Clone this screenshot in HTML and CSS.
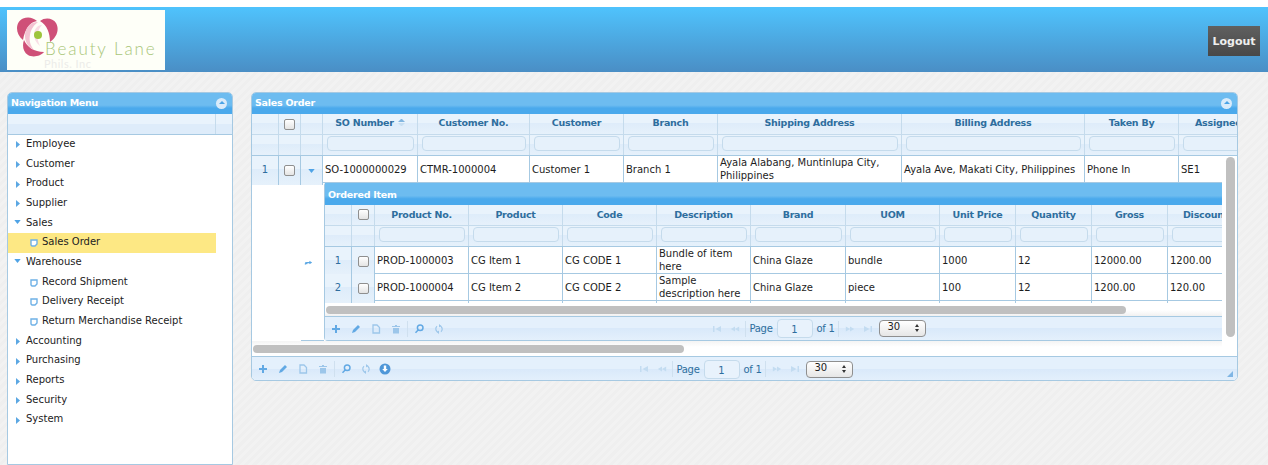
FILE: index.html
```html
<!DOCTYPE html>
<html lang="en">
<head>
  <meta charset="UTF-8">
  <title>Sales Order</title>
  <link rel="stylesheet" href="styles.css">
</head>
<body>
  <svg class="defs" width="0" height="0">
    <symbol id="i-right" viewBox="0 0 4 7"><path d="M0 0l4 3.500L0 7z"/></symbol>
    <symbol id="i-down" viewBox="0 0 8 5"><path d="M0 0h8L4 5z"/></symbol>
    <symbol id="i-leaf" viewBox="0 0 8 8"><path d="M1 1h6v4L5 7H2L1 6z" fill="#fff" stroke="#6fb1e6" stroke-width="1.4"/></symbol>
    <symbol id="i-plus" viewBox="0 0 10 10"><path d="M4 1h2v3h3v2H6v3H4V6H1V4h3z"/></symbol>
    <symbol id="i-pencil" viewBox="0 0 10 10"><path d="M7 1l2 2-5 5-3 1 1-3z"/></symbol>
    <symbol id="i-doc" viewBox="0 0 10 10"><path d="M2 1h4l2.500 2.500V9H2z" fill="none" stroke="currentColor" stroke-width="1.300"/></symbol>
    <symbol id="i-trash" viewBox="0 0 10 10"><path d="M1 2h8v1H1zM4 1h2v1H4zM2 4h6v5.500H2z"/></symbol>
    <symbol id="i-search" viewBox="0 0 10 10"><path d="M6.200 1a2.800 2.800 0 1 0 0 5.600 2.800 2.800 0 0 0 0-5.600zM4.200 6L1.500 8.700" fill="none" stroke="currentColor" stroke-width="1.500"/></symbol>
    <symbol id="i-refresh" viewBox="0 0 10 10"><path d="M3 2.300a3.400 3.400 0 0 0 2 6M7 7.700a3.400 3.400 0 0 0-2-6" fill="none" stroke="currentColor" stroke-width="1.200"/><path d="M5 0v3.400L7 1.700zM5 10V6.600L3 8.300z"/></symbol>
    <symbol id="i-download" viewBox="0 0 12 12"><circle cx="6" cy="6" r="5.500" fill="#4f97d8"/><path d="M4.800 2.500h2.400V6h1.600L6 9 3.200 6h1.600z" fill="#fff"/></symbol>
    <symbol id="i-first" viewBox="0 0 10 8"><path d="M1 1h1.500v6H1zM9 1v6L3.500 4z"/></symbol>
    <symbol id="i-prev" viewBox="0 0 12 8"><path d="M6 1v6L1 4zM11 1v6L6 4z"/></symbol>
    <symbol id="i-next" viewBox="0 0 12 8"><path d="M1 1v6l5-3zM6 1v6l5-3z"/></symbol>
    <symbol id="i-last" viewBox="0 0 10 8"><path d="M1 1v6l5.500-3zM7.500 1H9v6H7.500z"/></symbol>
    <symbol id="i-sub" viewBox="0 0 10 8"><path d="M1 5.500L3 3.500h5" fill="none" stroke="currentColor" stroke-width="1.300"/><path d="M6 1.500l3 2-3 2zM1 2.500l1 3 2.500-.5z"/></symbol>
  </svg>

  <header class="header">
    <div class="logo">
      <svg class="logo-mark" viewBox="0 0 46 46" width="46" height="46">
        <path d="M9 26C1 20 1 8 9 4.500c5-2 10-1 14 2.500C16 8 11 15 9 26z" fill="#cf5078"/>
        <path d="M26 7c5-4 13-3 16 2 4 7 0 15-6 19 0-9-3-17-10-21z" fill="#cf5078"/>
        <path d="M10 26c3 7 10 12 20 12-3 4-11 6-16 3-5-3-6-10-4-15z" fill="#cf5078"/>
        <path d="M24 8c-8 0-13 6-13 14 0 6 3 11 9 14-4-5-5-10-4-15 1-6 4-10 8-13z" fill="#f3c3d2"/>
        <path d="M28 11c-5 0-8 5-8 9 0 5 2 9 6 12-2-4-3-8-2-12 0-4 2-7 4-9z" fill="#f8dde5"/>
        <circle cx="24" cy="21" r="4" fill="#9dc53c"/>
      </svg>
      <span class="logo-name">Beauty Lane</span>
      <span class="logo-sub">Phils. Inc</span>
    </div>
    <button class="logout">Logout</button>
  </header>

  <main class="content">
    <aside class="panel nav-panel">
      <div class="title">Navigation Menu<span class="collapse"></span></div>
      <div class="nav-tools"><span></span></div>
      <ul class="tree">
        <li><svg class="ico-right"><use href="#i-right"/></svg>Employee</li>
        <li><svg class="ico-right"><use href="#i-right"/></svg>Customer</li>
        <li><svg class="ico-right"><use href="#i-right"/></svg>Product</li>
        <li><svg class="ico-right"><use href="#i-right"/></svg>Supplier</li>
        <li><svg class="ico-down"><use href="#i-down"/></svg>Sales</li>
        <li class="leaf selected"><svg class="ico-leaf"><use href="#i-leaf"/></svg>Sales Order</li>
        <li><svg class="ico-down"><use href="#i-down"/></svg>Warehouse</li>
        <li class="leaf"><svg class="ico-leaf"><use href="#i-leaf"/></svg>Record Shipment</li>
        <li class="leaf"><svg class="ico-leaf"><use href="#i-leaf"/></svg>Delivery Receipt</li>
        <li class="leaf"><svg class="ico-leaf"><use href="#i-leaf"/></svg>Return Merchandise Receipt</li>
        <li><svg class="ico-right"><use href="#i-right"/></svg>Accounting</li>
        <li><svg class="ico-right"><use href="#i-right"/></svg>Purchasing</li>
        <li><svg class="ico-right"><use href="#i-right"/></svg>Reports</li>
        <li><svg class="ico-right"><use href="#i-right"/></svg>Security</li>
        <li><svg class="ico-right"><use href="#i-right"/></svg>System</li>
      </ul>
    </aside>

    <section class="panel grid-panel">
      <div class="title">Sales Order<span class="collapse"></span></div>
      <div class="clip">
        <div class="row head so-cols">
          <div></div>
          <div class="center"><input type="checkbox"></div>
          <div></div>
          <div>SO Number<span class="sort"><i class="up"></i><i class="dn"></i></span></div>
          <div>Customer No.</div>
          <div>Customer</div>
          <div>Branch</div>
          <div>Shipping Address</div>
          <div>Billing Address</div>
          <div>Taken By</div>
          <div>Assigned To</div>
        </div>
        <div class="row filter so-cols">
          <div></div><div></div><div></div>
          <div><input></div><div><input></div><div><input></div><div><input></div>
          <div><input></div><div><input></div><div><input></div><div><input></div>
        </div>
      </div>
      <div class="body-wrap">
        <div class="body-scroll">
          <div class="row data so-cols">
            <div class="rn">1</div>
            <div class="center"><input type="checkbox"></div>
            <div class="center"><svg class="ico-down"><use href="#i-down"/></svg></div>
            <div>SO-1000000029</div>
            <div>CTMR-1000004</div>
            <div>Customer 1</div>
            <div>Branch 1</div>
            <div>Ayala Alabang, Muntinlupa City, Philippines</div>
            <div>Ayala Ave, Makati City, Philippines</div>
            <div>Phone In</div>
            <div>SE1</div>
          </div>
          <div class="sub-row">
            <div class="sub-gutter"><svg class="ico-sub"><use href="#i-sub"/></svg></div>
            <div class="sub-panel">
              <div class="title">Ordered Item</div>
              <div class="row head item-cols">
                <div></div>
                <div class="center"><input type="checkbox"></div>
                <div>Product No.</div>
                <div>Product</div>
                <div>Code</div>
                <div>Description</div>
                <div>Brand</div>
                <div>UOM</div>
                <div>Unit Price</div>
                <div>Quantity</div>
                <div>Gross</div>
                <div>Discount</div>
              </div>
              <div class="row filter item-cols">
                <div></div><div></div>
                <div><input></div><div><input></div><div><input></div><div><input></div><div><input></div>
                <div><input></div><div><input></div><div><input></div><div><input></div><div><input></div>
              </div>
              <div class="row data item-cols">
                <div class="rn">1</div>
                <div class="center"><input type="checkbox"></div>
                <div>PROD-1000003</div>
                <div>CG Item 1</div>
                <div>CG CODE 1</div>
                <div>Bundle of item here</div>
                <div>China Glaze</div>
                <div>bundle</div>
                <div>1000</div>
                <div>12</div>
                <div>12000.00</div>
                <div>1200.00</div>
              </div>
              <div class="row data item-cols">
                <div class="rn">2</div>
                <div class="center"><input type="checkbox"></div>
                <div>PROD-1000004</div>
                <div>CG Item 2</div>
                <div>CG CODE 2</div>
                <div>Sample description here</div>
                <div>China Glaze</div>
                <div>piece</div>
                <div>100</div>
                <div>12</div>
                <div>1200.00</div>
                <div>120.00</div>
              </div>
              <div class="hscroll sub-hscroll"><span></span></div>
              <div class="pager sub-pager">
                <div class="tools">
                  <svg><use href="#i-plus"/></svg>
                  <svg><use href="#i-pencil"/></svg>
                  <svg class="soft"><use href="#i-doc"/></svg>
                  <svg class="soft"><use href="#i-trash"/></svg>
                  <i class="sep"></i>
                  <svg><use href="#i-search"/></svg>
                  <svg class="soft"><use href="#i-refresh"/></svg>
                </div>
                <div class="paging">
                  <svg class="dim"><use href="#i-first"/></svg>
                  <svg class="dim"><use href="#i-prev"/></svg>
                  <i class="sep"></i>
                  <span>Page</span>
                  <b class="page-no">1</b>
                  <span>of 1</span>
                  <i class="sep"></i>
                  <svg class="dim"><use href="#i-next"/></svg>
                  <svg class="dim"><use href="#i-last"/></svg>
                  <b class="page-size">30<em></em></b>
                </div>
                <div></div>
              </div>
            </div>
          </div>
          <div class="hscroll main-hscroll"><span></span></div>
        </div>
        <div class="vscroll"><span></span></div>
      </div>
      <div class="pager main-pager">
        <div class="tools">
          <svg><use href="#i-plus"/></svg>
          <svg><use href="#i-pencil"/></svg>
          <svg class="soft"><use href="#i-doc"/></svg>
          <svg class="soft"><use href="#i-trash"/></svg>
          <i class="sep"></i>
          <svg><use href="#i-search"/></svg>
          <svg class="soft"><use href="#i-refresh"/></svg>
          <svg class="solid"><use href="#i-download"/></svg>
        </div>
        <div class="paging">
          <svg class="dim"><use href="#i-first"/></svg>
          <svg class="dim"><use href="#i-prev"/></svg>
          <i class="sep"></i>
          <span>Page</span>
          <b class="page-no">1</b>
          <span>of 1</span>
          <i class="sep"></i>
          <svg class="dim"><use href="#i-next"/></svg>
          <svg class="dim"><use href="#i-last"/></svg>
          <b class="page-size">30<em></em></b>
        </div>
        <div class="resize"></div>
      </div>
    </section>
  </main>
</body>
</html>
```

FILE: styles.css
```css
* {
  box-sizing: border-box;
}
html, body {
  height: 100%;
}
body {
  margin: 0;
  padding-top: 7px;
  display: flex;
  flex-direction: column;
  overflow: hidden;
  background-color: #fff;
  font-family: "DejaVu Sans", Verdana, sans-serif;
  font-size: 10px;
  color: #1d1d1d;
}
.defs {
  position: absolute;
}
.header {
  flex: none;
  height: 65px;
  padding: 3px 8px 0 7px;
  display: flex;
  justify-content: space-between;
  background: linear-gradient(#4fc3fd, #4a8ec5);
}
.logo {
  position: relative;
  width: 158px;
  height: 60px;
  background-color: #fefff8;
}
.logo-mark {
  position: absolute;
  left: 7px;
  top: 4px;
  filter: blur(0.4px);
}
.logo-name {
  position: absolute;
  left: 38px;
  top: 28px;
  font-family: Lato, sans-serif;
  font-size: 17px;
  font-weight: 300;
  letter-spacing: 1.9px;
  color: #a9c678;
}
.logo-sub {
  position: absolute;
  left: 37px;
  top: 47px;
  font-family: Lato, sans-serif;
  font-size: 11px;
  letter-spacing: 0.5px;
  color: #ecece9;
}
.logout {
  width: 52px;
  height: 30px;
  margin-top: 16px;
  padding: 0;
  border: none;
  background: linear-gradient(#606060, #484848);
  color: #eee;
  font-family: "DejaVu Sans", sans-serif;
  font-size: 11px;
  font-weight: bold;
}
.content {
  flex: 1;
  min-height: 0;
  padding: 20px 0 0 7px;
  display: flex;
  align-items: flex-start;
  gap: 18px;
  background: repeating-linear-gradient(135deg, #efefef 0 3px, #f2f2f2 3px 6px);
}
.panel {
  border: 1px solid #a6c9e2;
  border-radius: 5px 5px 0 0;
  background-color: #fff;
  overflow: hidden;
}
.title {
  position: relative;
  height: 21px;
  padding: 3px 3px 0;
  color: #fff;
  font-size: 9.5px;
  letter-spacing: -0.25px;
  font-weight: bold;
  line-height: 14px;
  background: linear-gradient(#6dbcf0 58%, #4aa9ec 72%);
}
.collapse {
  position: absolute;
  top: 5px;
  right: 5px;
  width: 11px;
  height: 11px;
  border-radius: 50%;
  background-color: #d9ebfa;
}
.collapse::after {
  content: "";
  position: absolute;
  left: 3px;
  top: 3px;
  border: 3px solid transparent;
  border-top: none;
  border-bottom: 3px solid #4aa3e6;
}

/* left menu */
.nav-panel {
  flex: none;
  align-self: stretch;
  width: 226px;
}
.nav-tools {
  height: 21px;
  border-bottom: 1px solid #a6c9e2;
  background: linear-gradient(#e9f3fc 50%, #deecfa 50%);
}
.nav-tools span {
  display: block;
  width: 1px;
  height: 20px;
  margin-left: 207px;
  background-color: #c5dbec;
}
.tree {
  list-style: none;
  margin: 0;
  padding: 0;
  color: #222;
}
.tree li {
  height: 19.7px;
  width: 208px;
  padding-left: 8px;
  display: flex;
  align-items: center;
  padding-bottom: 3px;
  white-space: nowrap;
}
.tree li.leaf {
  padding-left: 22px;
}
.tree li.selected {
  background-color: #fde884;
}
.ico-right {
  flex: none;
  width: 4px;
  height: 7px;
  margin: 3px 6px 0 0;
  fill: #5ba7e3;
}
.ico-down {
  flex: none;
  width: 7px;
  height: 4px;
  margin: 0 5px 0 -2px;
  fill: #4fa3e6;
}
.ico-leaf {
  flex: none;
  width: 8px;
  height: 8px;
  margin: 3px 4px 0 0;
}

/* grids */
.grid-panel {
  width: 987px;
  height: 289px;
  border-radius: 5px;
  background-color: #fff;
}
.clip {
  overflow: hidden;
}
.row {
  display: grid;
  width: max-content;
}
.so-cols {
  grid-template-columns: 27px 22px 22px 95px 112px 94px 94px 184px 183px 94px 94px;
}
.item-cols {
  grid-template-columns: 27px 23px 94px 94px 94px 94px 95px 94px 76px 76px 76px 76px;
}
.row > div {
  border-right: 1px solid #a6c9e2;
  min-width: 0;
}
.head {
  height: 21px;
  background: linear-gradient(#e9f3fc 45%, #deecfa 45%, #e6f1fb);
  border-bottom: 1px solid #c5dbec;
  color: #2e6e9e;
  font-size: 9.5px;
  letter-spacing: -0.25px;
  font-weight: bold;
}
.head > div {
  border-right-color: #c5dbec;
  display: flex;
  align-items: center;
  justify-content: center;
  padding-bottom: 3px;
}
.sub-panel .head > div {
  padding-bottom: 1px;
}
.sort {
  width: 7px;
  margin-left: 4px;
}
.sort i {
  display: block;
  border: 3.500px solid transparent;
  border-top: none;
  border-bottom: 3.500px solid #82b6e0;
  margin-bottom: 1px;
}
.sort i.dn {
  border-bottom: none;
  border-top: 3.500px solid #c8dff2;
}
.filter {
  height: 21px;
  background: linear-gradient(#e9f3fc 45%, #deecfa 45%, #e6f1fb);
  border-bottom: 1px solid #a6c9e2;
}
.filter > div {
  border-right-color: #c5dbec;
  padding: 1px 3px 0 4px;
}
.filter input {
  display: block;
  width: 100%;
  height: 15px;
  padding: 0;
  border: 1px solid #c5dbec;
  border-radius: 4px;
  background-color: #e6f1fb;
}
.data {
  height: 27px;
  background-color: #fff;
  border-bottom: 1px solid #a6c9e2;
  line-height: 13px;
}
.data > div {
  padding: 0 2px 3px;
  display: flex;
  align-items: center;
}
.data > .rn {
  justify-content: center;
  color: #2e6e9e;
  background: linear-gradient(#e9f3fc 45%, #deecfa 45%, #e6f1fb);
}
.data > .center, .head > .center {
  justify-content: center;
  padding: 0;
}
.data > .center:nth-child(2) {
  background: linear-gradient(#e9f3fc 45%, #deecfa 45%, #e6f1fb);
}
.data > .center:nth-child(3) {
  background: linear-gradient(#e9f3fc 45%, #deecfa 45%, #e6f1fb);
}
.data .ico-down {
  margin: 0;
}
input[type="checkbox"] {
  appearance: none;
  width: 11px;
  height: 11px;
  margin: 0;
  border: 1px solid #8f8f8f;
  border-radius: 2px;
  background: linear-gradient(#fff, #e4e4e4);
}
.body-wrap {
  display: flex;
  height: 200px;
}
.body-scroll {
  width: 970px;
  flex: none;
  overflow: hidden;
}
.sub-row {
  display: flex;
  height: 158px;
}
.sub-gutter {
  flex: none;
  width: 72px;
  height: 158px;
  display: flex;
  justify-content: flex-end;
  padding: 76px 11px 0 0;
  background: linear-gradient(#a6c9e2, #a6c9e2) right bottom / 23px 1px no-repeat;
}
.ico-sub {
  width: 9px;
  height: 8px;
  fill: #5ba7e3;
  color: #5ba7e3;
}
.sub-panel {
  flex: none;
  width: 986px;
  height: 158px;
  border-left: 1px solid #a6c9e2;
  border-bottom: 2px solid #a6c9e2;
  border-top-left-radius: 2px;
  border-bottom-left-radius: 4px;
}
.sub-panel .title {
  height: 22px;
  padding-top: 5px;
}
.hscroll {
  height: 16px;
  padding-top: 5px;
  background: linear-gradient(#fff 60%, #f1f1f1);
}
.hscroll span {
  display: block;
  height: 8px;
  border-radius: 4px;
  background-color: #c0c0c0;
}
.sub-hscroll {
  padding-left: 1px;
  border-bottom: 1px solid #a6c9e2;
}
.sub-hscroll span {
  width: 800px;
}
.main-hscroll {
  height: 15px;
  padding: 4px 0 0 1px;
  background: linear-gradient(#f4f4f4, #fff 40%, #fff);
}
.main-hscroll span {
  width: 431px;
}
.vscroll {
  flex: none;
  width: 15px;
  padding: 1px 2px 0 4px;
  background-color: #fff;
}
.vscroll span {
  display: block;
  width: 9px;
  height: 180px;
  border-radius: 5px;
  background-color: #c0c0c0;
}

/* pager */
.pager {
  display: grid;
  grid-template-columns: 1fr auto 1fr;
  align-items: center;
  background: linear-gradient(#e4f0fc 50%, #d9e9fa 50%, #e4f0fc);
  color: #2e6e9e;
}
.main-pager {
  height: 25px;
  border-top: 1px solid #a6c9e2;
  position: relative;
}
.sub-pager {
  height: 23px;
}
.tools {
  display: flex;
  align-items: center;
  gap: 10px;
  padding-left: 6px;
  color: #62a9e4;
  fill: #62a9e4;
}
.tools svg {
  width: 10px;
  height: 10px;
}
.tools svg.soft {
  color: #9cc6ea;
  fill: #9cc6ea;
}
.tools svg.solid {
  width: 12px;
  height: 12px;
  margin-left: -2px;
}
.tools .sep {
  margin: 0 -4px;
}
.sep {
  display: block;
  width: 1px;
  height: 16px;
  background-color: #cfe0ef;
}
.paging {
  display: flex;
  align-items: center;
  gap: 4px;
}
.paging span {
  letter-spacing: -0.3px;
}
.paging .sep {
  margin: 0 -0.5px;
}
.paging svg {
  width: 10px;
  height: 8px;
  margin: 0 2px;
  fill: #c3dcf1;
}
.page-no {
  width: 36px;
  height: 19px;
  border: 1px solid #c5dbec;
  border-radius: 4px;
  background-color: #e8f2fc;
  color: #2e6e9e;
  font-weight: normal;
  text-align: center;
  line-height: 19px;
}
.page-size {
  position: relative;
  width: 47px;
  height: 17px;
  padding-left: 8px;
  border: 1px solid #8f8f8f;
  border-radius: 4px;
  background: linear-gradient(#fff, #e6e6e6);
  color: #222;
  font-weight: normal;
  line-height: 12px;
}
.page-size em::before, .page-size em::after {
  content: "";
  position: absolute;
  right: 6px;
  border: 2.500px solid transparent;
}
.page-size em::before {
  top: 3px;
  border-top: none;
  border-bottom: 3px solid #333;
}
.page-size em::after {
  top: 8px;
  border-bottom: none;
  border-top: 3px solid #333;
}
.resize {
  position: absolute;
  right: 4px;
  bottom: 4px;
  border: 3.500px solid transparent;
  border-right-color: #7fb5e4;
  border-bottom-color: #7fb5e4;
}
```
